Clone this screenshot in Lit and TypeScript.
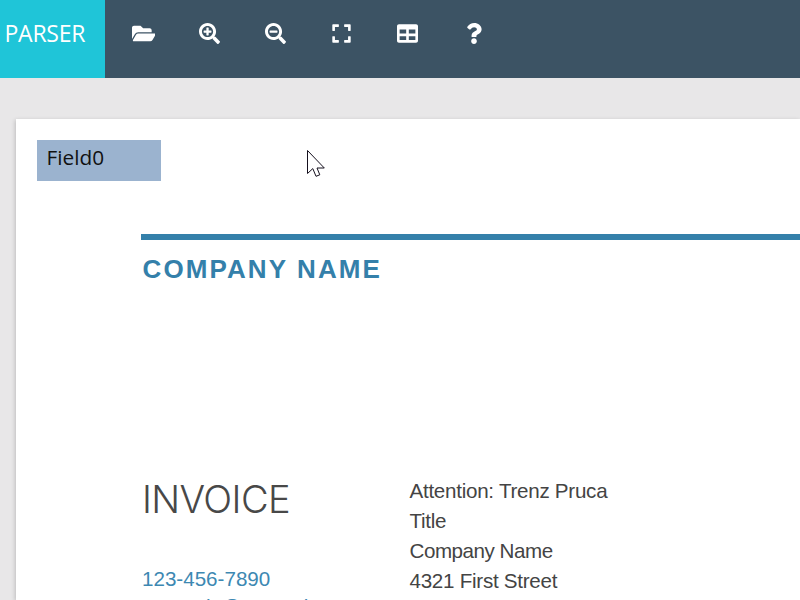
import { LitElement, html, css, svg } from "lit";
import { customElement } from "lit/decorators.js";

const icons = [
  { w: 23.6, vb: "0 0 576 512", d: "M572.694 292.093L500.27 416.248A63.997 63.997 0 0 1 444.989 448H45.025c-18.523 0-30.064-20.093-20.731-36.093l72.424-124.155A64 64 0 0 1 152 256h399.964c18.523 0 30.064 20.093 20.73 36.093zM152 224h328v-48c0-26.51-21.49-48-48-48H272l-64-64H48C21.49 64 0 85.49 0 112v278.046l69.077-118.418C86.214 242.25 117.989 224 152 224z" },
  { w: 21, vb: "0 0 512 512", d: "M304 192v32c0 6.600-5.400 12-12 12h-56v56c0 6.600-5.400 12-12 12h-32c-6.600 0-12-5.400-12-12v-56h-56c-6.600 0-12-5.400-12-12v-32c0-6.600 5.400-12 12-12h56v-56c0-6.600 5.400-12 12-12h32c6.600 0 12 5.400 12 12v56h56c6.600 0 12 5.400 12 12zm201 284.700L476.700 505c-9.400 9.400-24.600 9.400-33.900 0L343 405.300c-4.500-4.500-7-10.600-7-17V372c-35.300 27.600-79.700 44-128 44C93.100 416 0 322.900 0 208S93.100 0 208 0s208 93.100 208 208c0 48.300-16.400 92.700-44 128h16.300c6.400 0 12.500 2.500 17 7l99.700 99.700c9.300 9.400 9.300 24.600 0 34zM344 208c0-75.200-60.800-136-136-136S72 132.800 72 208s60.800 136 136 136 136-60.800 136-136z" },
  { w: 21, vb: "0 0 512 512", d: "M304 192v32c0 6.600-5.400 12-12 12H124c-6.600 0-12-5.400-12-12v-32c0-6.600 5.400-12 12-12h168c6.600 0 12 5.400 12 12zm201 284.700L476.700 505c-9.400 9.400-24.600 9.400-33.900 0L343 405.300c-4.500-4.500-7-10.600-7-17V372c-35.300 27.600-79.700 44-128 44C93.100 416 0 322.900 0 208S93.100 0 208 0s208 93.100 208 208c0 48.300-16.400 92.700-44 128h16.300c6.400 0 12.500 2.500 17 7l99.700 99.700c9.300 9.400 9.300 24.600 0 34zM344 208c0-75.200-60.800-136-136-136S72 132.800 72 208s60.800 136 136 136 136-60.800 136-136z" },
  { w: 19, vb: "0 0 448 512", d: "M0 180V56c0-13.300 10.700-24 24-24h124c6.600 0 12 5.400 12 12v40c0 6.600-5.400 12-12 12H64v84c0 6.600-5.400 12-12 12H12c-6.600 0-12-5.400-12-12zM288 44v40c0 6.600 5.400 12 12 12h84v84c0 6.600 5.400 12 12 12h40c6.600 0 12-5.400 12-12V56c0-13.300-10.700-24-24-24H300c-6.600 0-12 5.400-12 12zm148 276h-40c-6.600 0-12 5.400-12 12v84h-84c-6.600 0-12 5.400-12 12v40c0 6.600 5.400 12 12 12h124c13.300 0 24-10.700 24-24V332c0-6.600-5.400-12-12-12zM160 468v-40c0-6.600-5.400-12-12-12H64v-84c0-6.600-5.400-12-12-12H12c-6.600 0-12 5.400-12 12v124c0 13.300 10.700 24 24 24h124c6.600 0 12-5.400 12-12z" },
  { w: 21, vb: "0 0 512 512", d: "M464 32H48C21.490 32 0 53.490 0 80v352c0 26.510 21.490 48 48 48h416c26.510 0 48-21.490 48-48V80c0-26.510-21.490-48-48-48zM224 416H64v-96h160v96zm0-160H64v-96h160v96zm224 160H288v-96h160v96zm0-160H288v-96h160v96z" },
  { w: 16, vb: "0 0 384 512", d: "M202.021 0C122.202 0 70.503 32.703 29.914 91.026c-7.363 10.580-5.093 25.086 5.178 32.874l43.138 32.709c10.373 7.865 25.132 6.026 33.253-4.148 25.049-31.381 43.630-49.449 82.757-49.449 30.764 0 68.816 19.799 68.816 49.631 0 22.552-18.617 34.134-48.993 51.164-35.423 19.860-82.299 44.576-82.299 106.405V320c0 13.255 10.745 24 24 24h72.471c13.255 0 24-10.745 24-24v-5.773c0-42.860 125.268-44.645 125.268-160.627C377.504 66.256 286.902 0 202.021 0zM192 373.459c-38.196 0-69.271 31.075-69.271 69.271 0 38.195 31.075 69.270 69.271 69.270s69.271-31.075 69.271-69.271-31.075-69.270-69.271-69.270z" },
];

@customElement("app-root")
export class AppRoot extends LitElement {
  static styles = css`
    :host { display: block; width: 800px; height: 600px; overflow: hidden; background: #e8e7e8; position: relative; }
    .bar { display: flex; height: 78px; background: #3c5364; }
    .brand { width: 105px; height: 78px; box-sizing: border-box; padding: 16px 0 0 4.500px; background: #1fc5d8; color: #fff;
      font: 23px/34px "Open Sans", "Noto Sans", sans-serif; letter-spacing: -.25px; white-space: nowrap; }
    .tools { display: flex; padding-left: 5.500px; height: 67px; align-items: center; }
    .tool { width: 66px; display: flex; justify-content: center; }
    .tool svg { height: 21px; fill: #fff; display: block; }
    .page { margin: 41px 0 0 16px; height: 481px; background: #fff; box-shadow: -1px 1px 4px rgba(0,0,0,.18);
      font-family: "Liberation Sans", Arial, sans-serif; display: flow-root; white-space: nowrap; }
    .field { margin: 21px 0 0 21px; width: 124px; height: 41px; box-sizing: border-box; padding-left: 9.500px;
      background: #9bb3cf; color: #111; font: 20.800px/34px "Open Sans", "Noto Sans", sans-serif; }
    .content { margin: 53px 0 0 124.500px; border-top: 6px solid #3480aa; }
    .company { margin: 13px 0 0 2px; height: 32px; font-weight: 700; font-size: 26px; line-height: 32px; letter-spacing: 2.100px; color: #3480aa; }
    .cols { display: flex; margin-top: 191px; }
    .left { width: 269px; flex: none; padding-left: 1.500px; box-sizing: border-box; }
    .invoice { height: 46px; font: 300 38px/46px Inter, Roboto, sans-serif; letter-spacing: -.6px; color: #484848; }
    .contact { margin-top: 42px; font-size: 20.600px; line-height: 30px; color: #3d88b2; }
    .email { line-height: 26px; }
    .address { font-size: 20.600px; line-height: 30px; color: #444; letter-spacing: -.27px; }
    .tight { letter-spacing: -.47px; }
    .cursor { position: absolute; left: 307px; top: 150px; }
  `;
  render() {
    return html`
      <div class="bar">
        <div class="brand">PARSER</div>
        <div class="tools">
          ${icons.map((i) => html`<div class="tool"><svg width=${i.w} height="21" viewBox=${i.vb}>${svg`<path d=${i.d}></path>`}</svg></div>`)}
        </div>
      </div>
      <div class="page">
        <div class="field">Field0</div>
        <div class="content">
          <div class="company">COMPANY NAME</div>
          <div class="cols">
            <div class="left">
              <div class="invoice">INVOICE</div>
              <div class="contact"><div>123-456-7890</div><div class="email">no_reply@example.com</div></div>
            </div>
            <div class="address">
              <div>Attention: Trenz Pruca</div><div>Title</div><div class="tight">Company Name</div><div>4321 First Street</div>
            </div>
          </div>
        </div>
      </div>
      <svg class="cursor" width="19" height="28" viewBox="0 0 19 28">
        <path d="M.5 .5V23.500L5.800 18.600L9 26.300L12.800 24.800L10 18H17.300Z" fill="#fff" stroke="#15101e"></path>
      </svg>`;
  }
}
